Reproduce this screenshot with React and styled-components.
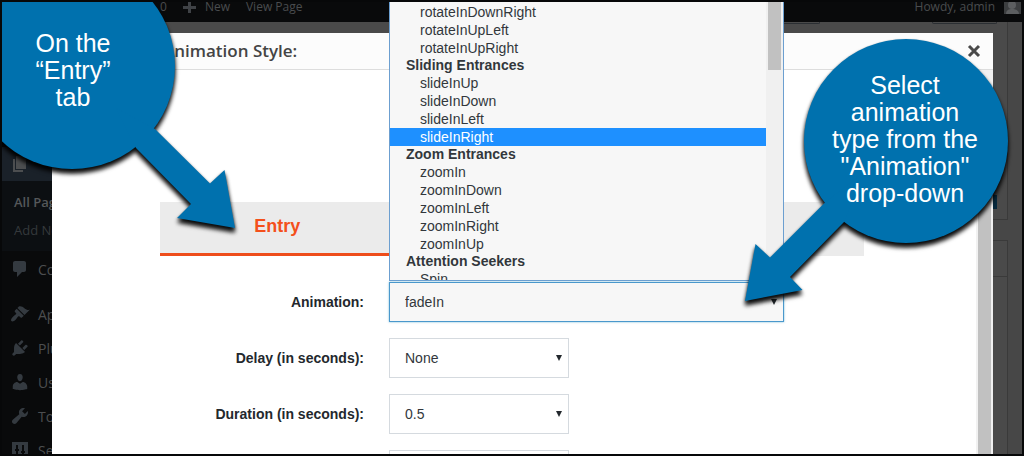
import React from 'react';
import styled, { createGlobalStyle } from 'styled-components';

const ui = `'Open Sans', 'Noto Sans', sans-serif`;
const arial = `'Liberation Sans', Arial, sans-serif`;

// ========================================================================================
// ************* Global *************
// ========================================================================================
const GlobalStyle = createGlobalStyle`
    * {
        box-sizing: border-box;
    }

    body {
        margin: 0;
        background: #070809;
    }
`;

const Frame = styled.div`
    position: relative;
    display: flex;
    flex-direction: column;
    height: 100vh;
    border: 2px solid #070809;
    overflow: hidden;
    font-family: ${ui};
`;
// ----------------------------------------------------------------------------------------


// ========================================================================================
// ************* Admin bar *************
// ========================================================================================
const AdminBar = styled.header`
    display: flex;
    flex: none;
    align-items: center;
    gap: 16px;
    height: 20px;
    padding: 0 1px 10px 158px;
    background: #090a0b;
    color: #4a4c4e;
    font-size: 12px;
    line-height: 18px;
`;

const BarLink = styled.a`
    display: flex;
    align-items: center;
    gap: 9px;
    color: inherit;
    text-decoration: none;
    white-space: nowrap;
    margin-left: ${(props) => (props.$end ? 'auto' : '0')};
`;

const PlusIcon = styled.svg`
    width: 13px;
    height: 13px;
    fill: #3f4246;
`;

const Avatar = styled.svg`
    width: 17px;
    height: 14px;
    background: #3c3e40;
`;
// ----------------------------------------------------------------------------------------


// ========================================================================================
// ************* Sidebar + page behind the modal *************
// ========================================================================================
const Body = styled.div`
    display: flex;
    flex: 1;
    min-height: 0;
`;

const Sidebar = styled.nav`
    flex: none;
    width: 160px;
    padding-top: 125px;
    background: #090a0b;
    color: #4c4e50;
    font-size: 14px;
`;

const MenuItem = styled.a`
    display: flex;
    align-items: center;
    gap: 8px;
    height: 34px;
    padding-left: 8px;
    margin-bottom: ${(props) => (props.$last ? '11px' : '0')};
    background: ${(props) => (props.$current ? '#1a2129' : 'transparent')};
    color: inherit;
    text-decoration: none;
`;

const MenuIcon = styled.svg`
    flex: none;
    width: 20px;
    height: 20px;
    fill: ${(props) => (props.$current ? '#4c4e50' : '#343a40')};
`;

const SubMenu = styled.div`
    height: 70px;
    padding: 7px 0 0 12px;
    margin-bottom: 1px;
    background: #0c0f12;
`;

const SubLink = styled.a`
    display: block;
    font-size: 13px;
    font-weight: ${(props) => (props.$current ? '600' : '400')};
    line-height: 28px;
    color: ${(props) => (props.$current ? '#55585a' : '#35393c')};
    text-decoration: none;
`;

const Page = styled.main`
    flex: 1;
    padding-right: 14px;
    background: #474747;
`;

const MetaBox = styled.section`
    display: flex;
    flex-direction: column;
    align-items: flex-end;
    justify-content: space-between;
    height: ${(props) => props.$height};
    padding: ${(props) => (props.$padded ? '0 10px 10px' : '0')};
    margin-bottom: 20px;
    background: #4a4a4a;
    border: 1px solid #3a3a3a;
    border-top-width: ${(props) => (props.$padded ? '0' : '1px')};
`;

const MetaHead = styled.div`
    width: 100%;
    height: 36px;
    border-bottom: 1px solid #3a3a3a;
`;

const ScreenTabs = styled.div`
    display: flex;
    gap: 112px;
`;

const ScreenTab = styled.div`
    width: 65px;
    height: 2px;
    border: 1px solid #2b2f33;
    border-top: 0;
    border-radius: 0 0 2px 2px;
`;

const PublishButton = styled.button`
    width: 80px;
    height: 14px;
    border: 0;
    background: #06283c;
`;
// ----------------------------------------------------------------------------------------


// ========================================================================================
// ************* Modal *************
// ========================================================================================
const Overlay = styled.div`
    position: absolute;
    inset: 31px 29px 0 50px;
    display: flex;
`;

const Modal = styled.div`
    display: flex;
    flex: 1;
    flex-direction: column;
    background: #fff;
`;

const ModalHead = styled.div`
    display: flex;
    flex: none;
    align-items: center;
    justify-content: space-between;
    height: 37px;
    padding: 0 12px 0 111px;
    background: #fcfcfc;
    border-bottom: 1px solid #ddd;
`;

const ModalTitle = styled.h1`
    margin: 0;
    font-size: 17px;
    font-weight: 600;
    line-height: 24px;
    color: #444;
`;

const CloseButton = styled.button`
    display: flex;
    padding: 0;
    border: 0;
    background: none;
    color: #4a4a4a;

    svg {
        width: 14px;
        height: 14px;
    }
`;

const ModalBody = styled.div`
    display: flex;
    flex: 1;
    min-height: 0;
`;

const Content = styled.div`
    flex: 1;
    padding: 132px 112px 0 108px;
`;

const Track = styled.div`
    flex: none;
    width: 17px;
    padding: 128px 2px 0;
    background: #f1f1f1;
`;

const Thumb = styled.div`
    height: ${(props) => props.$height};
    background: #c1c1c1;
`;

const Tabs = styled.div`
    display: grid;
    grid-template-columns: repeat(3, 1fr);
    height: 54px;
    margin-bottom: 26px;
    background: #ebebeb;
`;

const Tab = styled.button`
    padding: 0 0 2px;
    border: 0;
    border-bottom: 3px solid #ee4d1b;
    background: none;
    color: #f4501b;
    font-family: ${arial};
    font-size: 18px;
    font-weight: 700;
`;
// ----------------------------------------------------------------------------------------


// ========================================================================================
// ************* Form *************
// ========================================================================================
const Row = styled.div`
    display: grid;
    grid-template-columns: 204px 1fr;
    column-gap: 25px;
    align-items: center;
    margin-bottom: 16px;
    font-family: ${arial};
    font-size: 14px;
`;

const Label = styled.label`
    font-weight: 700;
    text-align: right;
    color: #23282d;
`;

const SelectWrap = styled.div`
    position: relative;
    width: ${(props) => props.$width};
`;

const Select = styled.select`
    display: block;
    width: 100%;
    height: 40px;
    padding: 0 15px;
    appearance: none;
    border: 1px solid ${(props) => (props.$open ? '#4a98cc' : '#d5dadf')};
    border-radius: 0;
    outline: none;
    box-shadow: ${(props) => (props.$open ? '0 0 2px rgba(30, 140, 190, 0.6)' : 'none')};
    background: ${(props) => (props.$open ? '#f7f7f7' : '#fff')};
    color: #32373c;
    font: inherit;
`;

const Caret = styled.svg`
    position: absolute;
    top: 17px;
    right: 7px;
    width: 6px;
    height: 6px;
    pointer-events: none;
`;

// opens upward from the select
const DropList = styled.div`
    position: absolute;
    right: 0;
    bottom: 41px;
    left: 0;
    display: flex;
    height: 279px;
    border: 1px solid #6c9fd0;
    border-top: 0;
    background: #f7f7f7;
    color: #32373c;
    overflow: hidden;
`;

const Options = styled.div`
    flex: 1;
    padding-top: 1px;
`;

const Option = styled.div`
    height: 18px;
    padding-left: 30px;
    line-height: 18px;
    background: ${(props) => (props.$active ? '#1e90ff' : 'transparent')};
    color: ${(props) => (props.$active ? '#fff' : 'inherit')};
`;

const OptionGroup = styled.div`
    height: 17px;
    padding-left: 16px;
    font-weight: 700;
    line-height: 17px;
`;

const ListTrack = styled.div`
    flex: none;
    width: 17px;
    padding: 0 2px;
    background: #f0f0f0;
`;
// ----------------------------------------------------------------------------------------


// ========================================================================================
// ************* Callouts *************
// ========================================================================================
const Callout = styled.aside`
    position: absolute;
    top: ${(props) => props.$top};
    left: ${(props) => props.$left};
    right: ${(props) => props.$right};
    width: ${(props) => props.$width};
    height: 280px;
    pointer-events: none;
`;

const CalloutShape = styled.svg`
    display: block;
    width: 100%;
    height: 100%;
    overflow: visible;
    fill: #0071ae;
    filter: drop-shadow(0 4px 2px rgba(0, 0, 0, 0.95)) drop-shadow(0 1px 1px rgba(0, 0, 0, 0.4));
`;

const CalloutText = styled.p`
    position: absolute;
    top: ${(props) => props.$top};
    left: ${(props) => props.$left};
    width: 204px;
    margin: 0;
    color: #fff;
    font-family: ${arial};
    font-size: 25px;
    line-height: 27px;
    text-align: center;
    white-space: pre-line;
`;
// ----------------------------------------------------------------------------------------

const MENU = [
    {
        text: 'Comments',
        last: true,
        icon: 'M5 2h9c1.100 0 2 .9 2 2v7c0 1.100-.9 2-2 2h-2l-5 5v-5H5c-1.100 0-2-.9-2-2V4c0-1.100.9-2 2-2z',
    },
    {
        text: 'Appearance',
        icon: 'M14.480 11.060L7.410 3.990l1.500-1.500c.5-.56 2.300-.47 3.510.32 1.210.8 1.430 1.280 2.910 2.100 1.180.64 2.450 1.260 4.450.85zm-.71.71L6.700 4.700 4.930 6.470c-.39.39-.39 1.020 0 1.410l1.060 1.060c.39.39.39 1.030 0 1.420-.6.6-1.430 1.110-2.210 1.690-.35.26-.7.53-1.010.84C1.430 14.230.4 16.080 1.400 17.070c.99 1 2.840-.03 4.180-1.360.31-.31.58-.66.85-1.020.57-.78 1.080-1.610 1.690-2.210.39-.39 1.020-.39 1.410 0l1.060 1.060c.39.39 1.020.39 1.410 0z',
    },
    {
        text: 'Plugins',
        icon: 'M13.110 4.360L9.870 7.600 8 5.730l3.240-3.240c.35-.34 1.050-.2 1.560.32.52.51.66 1.210.31 1.550zm-8 1.770l.91-1.120 9.010 9.010-1.190.84c-.71.71-2.630 1.160-3.820 1.160H6.140L4.900 17.260c-.59.59-1.540.59-2.120 0-.59-.58-.59-1.530 0-2.120l1.240-1.240v-3.880c0-1.130.4-3.190 1.090-3.890zm7.260 3.970l3.240-3.240c.34-.35 1.040-.21 1.550.31.52.51.66 1.210.31 1.550l-3.240 3.250z',
    },
    {
        text: 'Users',
        icon: 'M10 9.250c-2.270 0-2.730-3.440-2.730-3.440C7 4.020 7.820 2 9.970 2c2.160 0 2.980 2.020 2.710 3.810 0 0-.41 3.440-2.680 3.440zm0 2.570L12.720 10c2.390 0 4.520 2.330 4.520 4.530v2.490s-3.650 1.130-7.240 1.130c-3.650 0-7.240-1.130-7.240-1.130v-2.490c0-2.250 1.940-4.480 4.470-4.480z',
    },
    {
        text: 'Tools',
        icon: 'M16.680 9.770c-1.340 1.340-3.300 1.670-4.950.99l-5.410 6.520c-.99.99-2.590.99-3.580 0s-.99-2.590 0-3.570l6.520-5.420c-.68-1.650-.35-3.610.99-4.950 1.280-1.280 3.120-1.620 4.720-1.060l-2.890 2.890 2.820 2.820 2.860-2.870c.53 1.580.18 3.390-1.080 4.650z',
    },
    {
        text: 'Settings',
        icon: 'M2 2h16v16H2zM6 5v4H5v2h1v5h2v-5h1V9H8V5zM12 5v6h-1v2h1v3h2v-3h1v-2h-1V5z',
    },
];

const ANIMATIONS = [
    { items: ['rotateInDownRight', 'rotateInUpLeft', 'rotateInUpRight'] },
    { group: 'Sliding Entrances', items: ['slideInUp', 'slideInDown', 'slideInLeft', 'slideInRight'] },
    { group: 'Zoom Entrances', items: ['zoomIn', 'zoomInDown', 'zoomInLeft', 'zoomInRight', 'zoomInUp'] },
    { group: 'Attention Seekers', items: ['Spin'] },
];

const Field = ({ id, label, value, width = '180px', open, children }) => (
    <Row>
        <Label htmlFor={id}>{label}</Label>
        <SelectWrap $width={width}>
            <Select id={id} $open={open}>
                <option>{value}</option>
            </Select>
            <Caret viewBox="0 0 6 6">
                <path d="M0 0h6L3 6z" fill="#23282d" />
            </Caret>
            {children}
        </SelectWrap>
    </Row>
);

const App = () => {
    return (
        <Frame>
            <GlobalStyle />

            {/* Admin bar START */}
            <AdminBar>
                <BarLink href="#comments">0</BarLink>
                <BarLink href="#new">
                    <PlusIcon viewBox="0 0 13 13">
                        <path d="M5 1h3v4h5v3H8v4H5V8H0V5h5z" />
                    </PlusIcon>
                    New
                </BarLink>
                <BarLink href="#view">View Page</BarLink>
                <BarLink href="#profile" $end>
                    Howdy, admin
                    <Avatar viewBox="0 0 17 14">
                        <circle cx="8" cy="5" r="4" fill="#5c5e60" />
                        <path d="M2 14c0-4 3-5 6-5s7 1 7 5z" fill="#5c5e60" />
                    </Avatar>
                </BarLink>
            </AdminBar>
            {/* Admin bar END */}

            <Body>
                <Sidebar>
                    <MenuItem href="#pages" aria-label="Pages" $current>
                        <MenuIcon viewBox="0 0 20 20" $current>
                            <path d="M6 15V2h10v13H6zm-1 1h8v2H3V5h2v11z" />
                        </MenuIcon>
                    </MenuItem>
                    <SubMenu>
                        <SubLink href="#all" $current>All Pages</SubLink>
                        <SubLink href="#add">Add New</SubLink>
                    </SubMenu>
                    {MENU.map(({ text, icon, last }) => (
                        <MenuItem key={text} href={`#${text}`} $last={last}>
                            <MenuIcon viewBox="0 0 20 20">
                                <path d={icon} fillRule="evenodd" />
                            </MenuIcon>
                            {text}
                        </MenuItem>
                    ))}
                </Sidebar>
                <Page>
                    <MetaBox $height="198px" $padded>
                        <ScreenTabs>
                            <ScreenTab />
                            <ScreenTab />
                        </ScreenTabs>
                        <PublishButton aria-label="Publish" />
                    </MetaBox>
                    <MetaBox $height="300px">
                        <MetaHead />
                    </MetaBox>
                </Page>
            </Body>

            {/* Modal START */}
            <Overlay>
                <Modal role="dialog" aria-label="Animation Style">
                    <ModalHead>
                        <ModalTitle>Animation Style:</ModalTitle>
                        <CloseButton aria-label="Close">
                            <svg viewBox="0 0 14 14" stroke="currentColor" strokeWidth="3">
                                <path d="M2 2l10 10M12 2L2 12" />
                            </svg>
                        </CloseButton>
                    </ModalHead>
                    <ModalBody>
                        <Content>
                            <Tabs>
                                <Tab>Entry</Tab>
                            </Tabs>
                            <Field id="animation" label="Animation:" value="fadeIn" width="395px" open>
                                <DropList>
                                    <Options>
                                        {ANIMATIONS.map(({ group, items }) => (
                                            <React.Fragment key={items[0]}>
                                                {group && <OptionGroup>{group}</OptionGroup>}
                                                {items.map((item) => (
                                                    <Option key={item} $active={item === 'slideInRight'}>{item}</Option>
                                                ))}
                                            </React.Fragment>
                                        ))}
                                    </Options>
                                    <ListTrack>
                                        <Thumb $height="68px" />
                                    </ListTrack>
                                </DropList>
                            </Field>
                            <Field id="delay" label="Delay (in seconds):" value="None" />
                            <Field id="duration" label="Duration (in seconds):" value="0.5" />
                            <Field id="offset" label="" value="" />
                        </Content>
                        <Track>
                            <Thumb $height="100%" />
                        </Track>
                    </ModalBody>
                </Modal>
            </Overlay>
            {/* Modal END */}

            {/* Callouts START */}
            <Callout $top="-2px" $left="-2px" $width="240px">
                <CalloutShape viewBox="0 0 240 280">
                    <circle cx="72" cy="66" r="103" />
                    <path d="M155 129l55 54.500 14.500-13.500L235 228l-58-10 14-14-55-56-20-40z" />
                </CalloutShape>
                <CalloutText $top="30px" $left="-29px">{'On the\n“Entry”\ntab'}</CalloutText>
            </Callout>
            <Callout $top="28px" $right="2px" $width="280px">
                <CalloutShape viewBox="740 30 280 280">
                    <circle cx="906" cy="141" r="102" />
                    <path d="M824 203.500L770 257.500 755.500 244 745 301l57.500-11-12.500-13 54-55 20-50z" />
                </CalloutShape>
                <CalloutText $top="42px" $left="63px">{'Select\nanimation\ntype from the\n"Animation"\ndrop-down'}</CalloutText>
            </Callout>
            {/* Callouts END */}
        </Frame>
    );
};

export default App;
